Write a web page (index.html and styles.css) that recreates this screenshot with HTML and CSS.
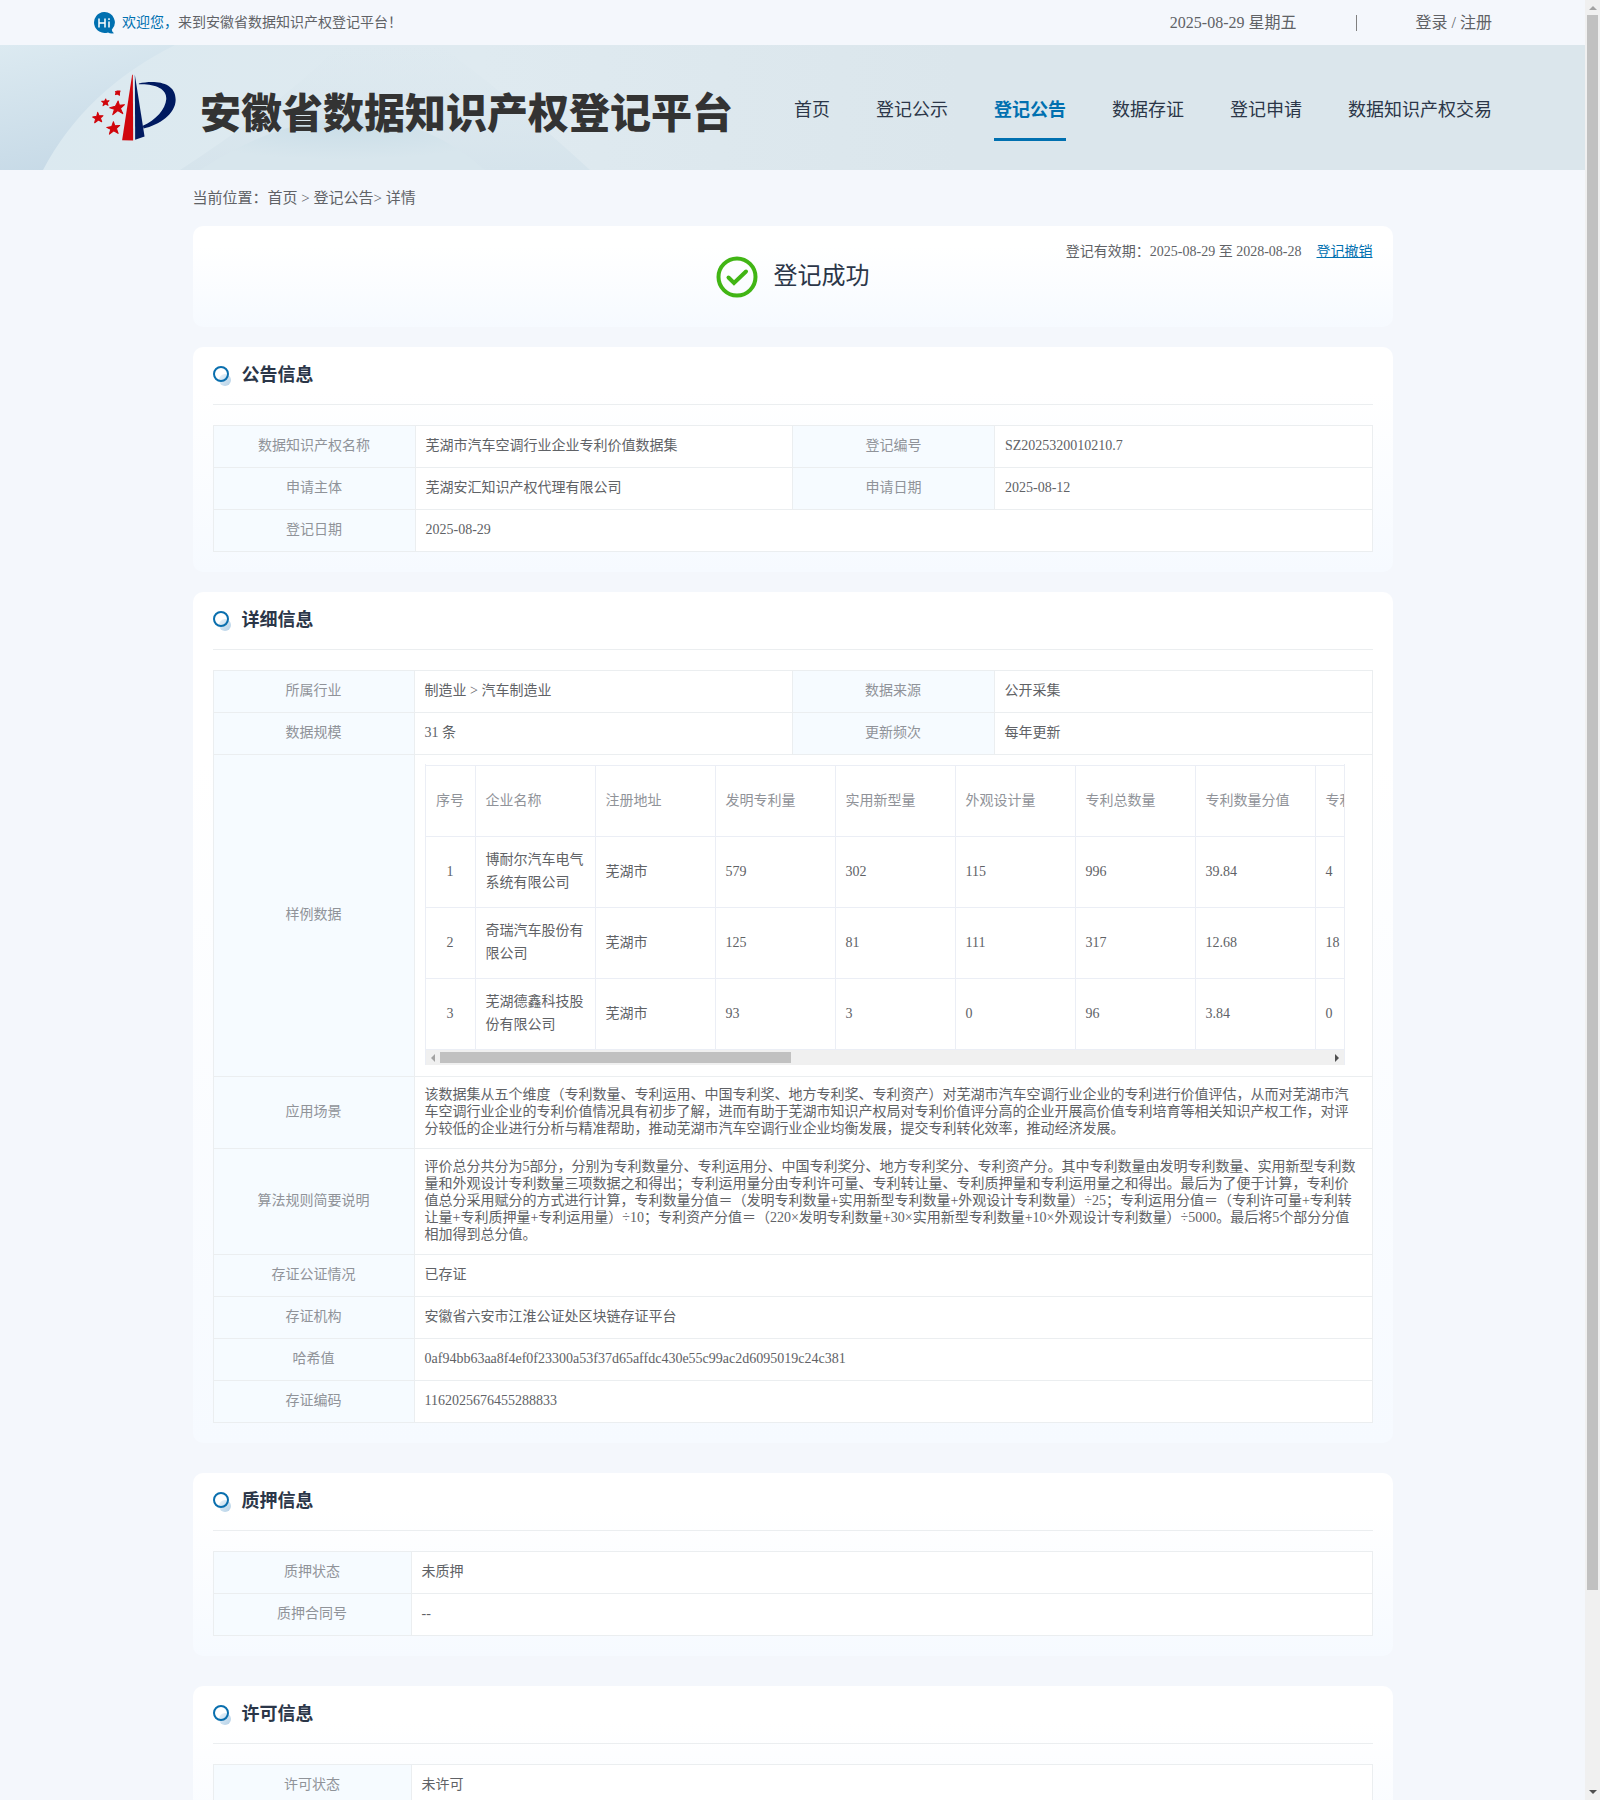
FILE: index.html
```html
<!DOCTYPE html>
<html lang="zh-CN">
<head>
    <meta charset="UTF-8">
    <meta name="viewport" content="width=device-width, initial-scale=1.0">
    <title>安徽省数据知识产权登记平台</title>
    <link rel="stylesheet" href="styles.css">
</head>
<body>

<!-- Shared icon for the section titles -->
<svg class="sprite" aria-hidden="true">
    <defs>
        <linearGradient id="ball" x1="0" y1="0" x2="1" y2="1">
            <stop offset="0" stop-color="#eaf3f9"/>
            <stop offset="1" stop-color="#b2cfe6"/>
        </linearGradient>
    </defs>
    <symbol id="ring" viewBox="0 0 19 22">
        <circle cx="12" cy="15" r="6" fill="url(#ball)"/>
        <circle cx="8" cy="9" r="7" fill="none" stroke="#0a6fae" stroke-width="2"/>
    </symbol>
</svg>

<div class="page">

    <!-- Top bar -->
    <div class="topbar">
        <div class="welcome">
            <svg class="hi-icon" viewBox="0 0 22 22" aria-hidden="true">
                <path d="M11 0a10.500 10.500 0 1 0 4 20.400q2 1.400 6 .9-2-1.500-2.200-3.500A10.500 10.500 0 0 0 11 0z" fill="#0070b0"/>
                <path d="M6 6.500v9M12 6.500v9M6 11h6M16 9.500v6M16 6.300v1.600" stroke="#fff" stroke-width="1.500" fill="none"/>
            </svg>
            <p><span class="hello">欢迎您，</span>来到安徽省数据知识产权登记平台！</p>
        </div>
        <div class="account">
            <span>2025-08-29 星期五</span>
            <span class="divider"></span>
            <span><a href="#">登录</a> / <a href="#">注册</a></span>
        </div>
    </div>

    <!-- Header -->
    <header class="header">
        <svg class="header-bg" viewBox="0 0 960 125" aria-hidden="true">
            <defs>
                <linearGradient id="wing" x1="0" y1="0" x2="0.300" y2="1">
                    <stop offset="0" stop-color="#dceaf1"/>
                    <stop offset="1" stop-color="#c7dae7"/>
                </linearGradient>
                <linearGradient id="sweep" x1="0" y1="0" x2="1" y2="0">
                    <stop offset="0" stop-color="#dbe9f0"/>
                    <stop offset="0.500" stop-color="#dfeaf0"/>
                    <stop offset="1" stop-color="#dbe6ec"/>
                </linearGradient>
                <radialGradient id="dome" cx="0.500" cy="0.200" r="0.600">
                    <stop offset="0" stop-color="#cbdee8"/>
                    <stop offset="1" stop-color="#d8e6ed"/>
                </radialGradient>
                <linearGradient id="beam" x1="0" y1="0" x2="0" y2="1">
                    <stop offset="0" stop-color="#d9e6ed" stop-opacity="0"/>
                    <stop offset="1" stop-color="#d6e4ec"/>
                </linearGradient>
            </defs>
            <rect width="960" height="125" fill="url(#sweep)"/>
            <path d="M0 0H175Q85 45 43 125H0z" fill="url(#wing)"/>
            <path d="M340 0H440Q520 60 590 125H180Q280 60 340 0z" fill="url(#beam)"/>
            <path d="M200 125Q280 72 360 72Q430 76 485 125z" fill="url(#dome)"/>
        </svg>
        <a href="#" class="brand">
            <svg class="logo" viewBox="36 42 254 202" aria-hidden="true">
                <path d="M156 44L126 239L159 240L158 44z" fill="#d0060c"/>
                <path d="M164 44L193 228L165 238z" fill="#001a60"/>
                <path d="M176 70C222 60 286 64 286 118C286 160 236 194 190 204L188 196C226 180 256 146 258 116C260 84 222 70 176 72z" fill="#001a60"/>
                <g fill="#d0060c" stroke="#d0060c" stroke-width="3" stroke-linejoin="round">
                    <polygon points="114,122 118,135 133,133 121,144 128,160 113,151 98,163 103,147 89,142 106,138"/>
                    <polygon points="100,184 104,196 119,195 109,204 114,219 101,211 88,221 92,207 80,201 95,198"/>
                    <polygon points="53,156 57,166 69,166 61,173 65,184 55,179 44,187 47,175 38,170 50,168"/>
                    <polygon points="77,116 79,122 87,121 81,127 84,135 76,131 69,136 71,128 65,123 74,122"/>
                    <polygon points="112,92 120,92 118,98 118,105 112,101 106,103 108,97 106,94"/>
                </g>
            </svg>
            <h1>安徽省数据知识产权登记平台</h1>
        </a>
        <nav class="nav">
            <a href="#">首页</a>
            <a href="#">登记公示</a>
            <a href="#" class="active">登记公告</a>
            <a href="#">数据存证</a>
            <a href="#">登记申请</a>
            <a href="#">数据知识产权交易</a>
        </nav>
    </header>

    <main class="container">
        <p class="breadcrumb">当前位置：<a href="#">首页</a> &gt; <a href="#">登记公告</a>&gt; 详情</p>

        <!-- Registration status -->
        <section class="card status">
            <div class="result">
                <svg class="check" viewBox="0 0 42 42" aria-hidden="true">
                    <circle cx="21" cy="21" r="18.500" fill="none" stroke="#41b515" stroke-width="4"/>
                    <path d="M12.500 21.500L18 27L30 15.500" fill="none" stroke="#41b515" stroke-width="4" stroke-linecap="round"/>
                </svg>
                <span>登记成功</span>
            </div>
            <div class="validity">
                <span>登记有效期：2025-08-29 至 2028-08-28</span>
                <a href="#">登记撤销</a>
            </div>
        </section>

        <!-- Announcement -->
        <section class="card">
            <h2><svg class="ring" aria-hidden="true"><use href="#ring"/></svg>公告信息</h2>
            <table class="info">
                <colgroup><col class="label-col"><col><col class="label-col"><col></colgroup>
                <tr>
                    <th>数据知识产权名称</th>
                    <td>芜湖市汽车空调行业企业专利价值数据集</td>
                    <th>登记编号</th>
                    <td>SZ2025320010210.7</td>
                </tr>
                <tr>
                    <th>申请主体</th>
                    <td>芜湖安汇知识产权代理有限公司</td>
                    <th>申请日期</th>
                    <td>2025-08-12</td>
                </tr>
                <tr>
                    <th>登记日期</th>
                    <td colspan="3">2025-08-29</td>
                </tr>
            </table>
        </section>

        <!-- Details -->
        <section class="card detail">
            <h2><svg class="ring" aria-hidden="true"><use href="#ring"/></svg>详细信息</h2>
            <table class="info">
                <colgroup><col class="label-col"><col><col class="label-col"><col></colgroup>
                <tr>
                    <th>所属行业</th>
                    <td>制造业 &gt; 汽车制造业</td>
                    <th>数据来源</th>
                    <td>公开采集</td>
                </tr>
                <tr>
                    <th>数据规模</th>
                    <td>31 条</td>
                    <th>更新频次</th>
                    <td>每年更新</td>
                </tr>
                <tr>
                    <th>样例数据</th>
                    <td colspan="3">
                        <div class="sample">
                            <div class="sample-view">
                                <table class="sample-table">
                                    <thead>
                                        <tr>
                                            <th class="index">序号</th>
                                            <th>企业名称</th>
                                            <th>注册地址</th>
                                            <th>发明专利量</th>
                                            <th>实用新型量</th>
                                            <th>外观设计量</th>
                                            <th>专利总数量</th>
                                            <th>专利数量分值</th>
                                            <th>专利许可量</th>
                                        </tr>
                                    </thead>
                                    <tbody>
                                        <tr>
                                            <td class="index">1</td>
                                            <td>博耐尔汽车电气系统有限公司</td>
                                            <td>芜湖市</td>
                                            <td>579</td>
                                            <td>302</td>
                                            <td>115</td>
                                            <td>996</td>
                                            <td>39.84</td>
                                            <td>4</td>
                                        </tr>
                                        <tr>
                                            <td class="index">2</td>
                                            <td>奇瑞汽车股份有限公司</td>
                                            <td>芜湖市</td>
                                            <td>125</td>
                                            <td>81</td>
                                            <td>111</td>
                                            <td>317</td>
                                            <td>12.68</td>
                                            <td>18</td>
                                        </tr>
                                        <tr>
                                            <td class="index">3</td>
                                            <td>芜湖德鑫科技股份有限公司</td>
                                            <td>芜湖市</td>
                                            <td>93</td>
                                            <td>3</td>
                                            <td>0</td>
                                            <td>96</td>
                                            <td>3.84</td>
                                            <td>0</td>
                                        </tr>
                                    </tbody>
                                </table>
                            </div>
                            <div class="h-scroll">
                                <span class="arrow left"></span>
                                <div class="h-track"><div class="h-thumb"></div></div>
                                <span class="arrow right"></span>
                            </div>
                        </div>
                    </td>
                </tr>
                <tr>
                    <th>应用场景</th>
                    <td colspan="3">该数据集从五个维度（专利数量、专利运用、中国专利奖、地方专利奖、专利资产）对芜湖市汽车空调行业企业的专利进行价值评估，从而对芜湖市汽车空调行业企业的专利价值情况具有初步了解，进而有助于芜湖市知识产权局对专利价值评分高的企业开展高价值专利培育等相关知识产权工作，对评分较低的企业进行分析与精准帮助，推动芜湖市汽车空调行业企业均衡发展，提交专利转化效率，推动经济发展。</td>
                </tr>
                <tr>
                    <th>算法规则简要说明</th>
                    <td colspan="3">评价总分共分为5部分，分别为专利数量分、专利运用分、中国专利奖分、地方专利奖分、专利资产分。其中专利数量由发明专利数量、实用新型专利数量和外观设计专利数量三项数据之和得出；专利运用量分由专利许可量、专利转让量、专利质押量和专利运用量之和得出。最后为了便于计算，专利价值总分采用赋分的方式进行计算，专利数量分值＝（发明专利数量+实用新型专利数量+外观设计专利数量）÷25；专利运用分值＝（专利许可量+专利转让量+专利质押量+专利运用量）÷10；专利资产分值＝（220×发明专利数量+30×实用新型专利数量+10×外观设计专利数量）÷5000。最后将5个部分分值相加得到总分值。</td>
                </tr>
                <tr>
                    <th>存证公证情况</th>
                    <td colspan="3">已存证</td>
                </tr>
                <tr>
                    <th>存证机构</th>
                    <td colspan="3">安徽省六安市江淮公证处区块链存证平台</td>
                </tr>
                <tr>
                    <th>哈希值</th>
                    <td colspan="3">0af94bb63aa8f4ef0f23300a53f37d65affdc430e55c99ac2d6095019c24c381</td>
                </tr>
                <tr>
                    <th>存证编码</th>
                    <td colspan="3">1162025676455288833</td>
                </tr>
            </table>
        </section>

        <!-- Pledge -->
        <section class="card spaced">
            <h2><svg class="ring" aria-hidden="true"><use href="#ring"/></svg>质押信息</h2>
            <table class="info narrow">
                <colgroup><col class="label-col"><col></colgroup>
                <tr>
                    <th>质押状态</th>
                    <td>未质押</td>
                </tr>
                <tr>
                    <th>质押合同号</th>
                    <td>--</td>
                </tr>
            </table>
        </section>

        <!-- Licence -->
        <section class="card spaced">
            <h2><svg class="ring" aria-hidden="true"><use href="#ring"/></svg>许可信息</h2>
            <table class="info narrow">
                <colgroup><col class="label-col"><col></colgroup>
                <tr>
                    <th>许可状态</th>
                    <td>未许可</td>
                </tr>
                <tr>
                    <th>许可合同号</th>
                    <td>--</td>
                </tr>
            </table>
        </section>
    </main>
</div>

<!-- Page scrollbar -->
<div class="v-scroll">
    <span class="arrow up"></span>
    <div class="v-track"><div class="v-thumb"></div></div>
    <span class="arrow down"></span>
</div>

</body>
</html>
```
FILE: styles.css
```css
* {
    box-sizing: border-box;
}
body {
    display: flex;
    height: 100vh;
    margin: 0;
    overflow: hidden;
    background-color: #f4f7fc;
    color: #606266;
    font-family: "Liberation Serif", "Noto Sans CJK SC", serif;
    font-size: 14px;
    line-height: 17px;
    text-spacing-trim: space-all;
}
a {
    color: inherit;
    text-decoration: none;
}
h1, h2, p {
    margin: 0;
}
.sprite {
    position: absolute;
    width: 0;
    height: 0;
}
.page {
    flex: 1;
    min-width: 0;
    overflow: hidden;
}

/* Top bar */
.topbar {
    display: flex;
    align-items: center;
    justify-content: space-between;
    height: 45px;
    padding: 0 93px;
}
.welcome {
    display: flex;
    align-items: center;
    gap: 7px;
}
.hi-icon {
    width: 22px;
    height: 22px;
}
.hello {
    color: #0070b0;
}
.account {
    display: flex;
    align-items: center;
    gap: 59px;
    font-size: 16px;
}
.divider {
    width: 1px;
    height: 16px;
    background-color: #808080;
}

/* Header */
.header {
    position: relative;
    display: flex;
    align-items: center;
    justify-content: space-between;
    height: 125px;
    padding: 0 93px 0 92px;
    background-color: #dbe6ec;
}
.header-bg {
    position: absolute;
    top: 0;
    left: 0;
    height: 100%;
}
.brand, .nav {
    position: relative;
    display: flex;
    align-items: center;
}
.brand {
    gap: 23px;
}
.logo {
    width: 85px;
    height: 68px;
}
.brand h1 {
    padding-top: 12px;
    color: #333;
    font-size: 41px;
    font-weight: 900;
    line-height: 44px;
    white-space: nowrap;
}
.nav {
    gap: 46px;
    color: #2b3648;
    font-size: 18px;
    white-space: nowrap;
}
.nav a {
    padding: 24px 0 16px;
    border-bottom: 3px solid transparent;
    line-height: 24px;
}
.nav .active {
    border-bottom-color: #0070b0;
    color: #0070b0;
    font-weight: bold;
}

/* Content */
.container {
    max-width: 1200px;
    margin: 0 auto;
}
.breadcrumb {
    padding: 18px 0;
    font-size: 15px;
    line-height: 20px;
}
.card {
    margin-bottom: 20px;
    padding: 0 20px 20px;
    border-radius: 10px;
    background-image: linear-gradient(#fff, #fff 20%, #f6faff);
}
.card.spaced, .card.detail {
    margin-bottom: 30px;
}
.card h2 {
    display: flex;
    align-items: center;
    gap: 10px;
    height: 58px;
    margin-bottom: 20px;
    border-bottom: 1px solid #ebeef0;
    color: #2b3648;
    font-size: 18px;
}
.ring {
    width: 19px;
    height: 22px;
}

/* Status card */
.status {
    display: grid;
    grid-template-columns: 1fr auto 1fr;
    height: 101px;
    padding-bottom: 0;
}
.result {
    display: flex;
    grid-column: 2;
    align-items: center;
    gap: 16px;
    color: #2b3648;
    font-size: 24px;
}
.check {
    width: 42px;
    height: 42px;
}
.validity {
    display: flex;
    justify-content: flex-end;
    gap: 15px;
    padding-top: 17px;
}
.validity a {
    color: #0070b0;
    text-decoration: underline;
}

/* Info tables */
.info {
    width: 100%;
    border-collapse: collapse;
    table-layout: fixed;
    background-color: #fff;
}
.label-col {
    width: 202px;
}
.detail .label-col:first-child {
    width: 201px;
}
.narrow .label-col {
    width: 198px;
}
.info th, .info td {
    height: 42px;
    padding: 9px 10px 11px;
    border: 1px solid #ebeef0;
}
.info th {
    background-color: #f6fbff;
    color: #909399;
    font-weight: normal;
}

/* Sample data */
.sample {
    max-width: 920px;
    padding-top: 1px;
    border-left: 1px solid #ebeef5;
    border-right: 1px solid #ebeef5;
}
.sample-view {
    overflow: hidden;
}
.sample-table {
    width: 1010px;
    border-collapse: separate;
    border-spacing: 0;
    border-top: 1px solid #ebeef5;
    table-layout: fixed;
    line-height: 23px;
}
.info .sample-table th, .info .sample-table td {
    width: 120px;
    height: 71px;
    padding: 0 10px 2px;
    border: 0;
    border-right: 1px solid #ebeef5;
    border-bottom: 1px solid #ebeef5;
    text-align: left;
}
.info .sample-table th {
    background-color: #fff;
}
.info .sample-table .index {
    width: 50px;
    padding: 0 0 2px;
    text-align: center;
}

/* Scrollbars */
.h-scroll {
    display: flex;
    align-items: center;
    height: 15px;
    padding: 0 5px;
    background-color: #f0f0f0;
}
.h-track {
    flex: 1;
    padding: 0 5px;
}
.h-thumb {
    width: 351px;
    height: 11px;
    background-color: #c1c1c1;
}
.v-scroll {
    display: flex;
    flex-direction: column;
    align-items: center;
    width: 15px;
    padding: 6px 0;
    background-color: #f0f0f0;
}
.v-track {
    flex: 1;
    padding: 5px 0;
}
.v-thumb {
    width: 11px;
    height: 89%;
    background-color: #c1c1c1;
}
.arrow {
    border: 4px solid transparent;
}
.arrow.left {
    border-left-width: 0;
    border-right-color: #a3a3a3;
}
.arrow.right {
    border-right-width: 0;
    border-left-color: #505050;
}
.arrow.up {
    border-top-width: 0;
    border-bottom-color: #a3a3a3;
}
.arrow.down {
    border-bottom-width: 0;
    border-top-color: #505050;
}
```
